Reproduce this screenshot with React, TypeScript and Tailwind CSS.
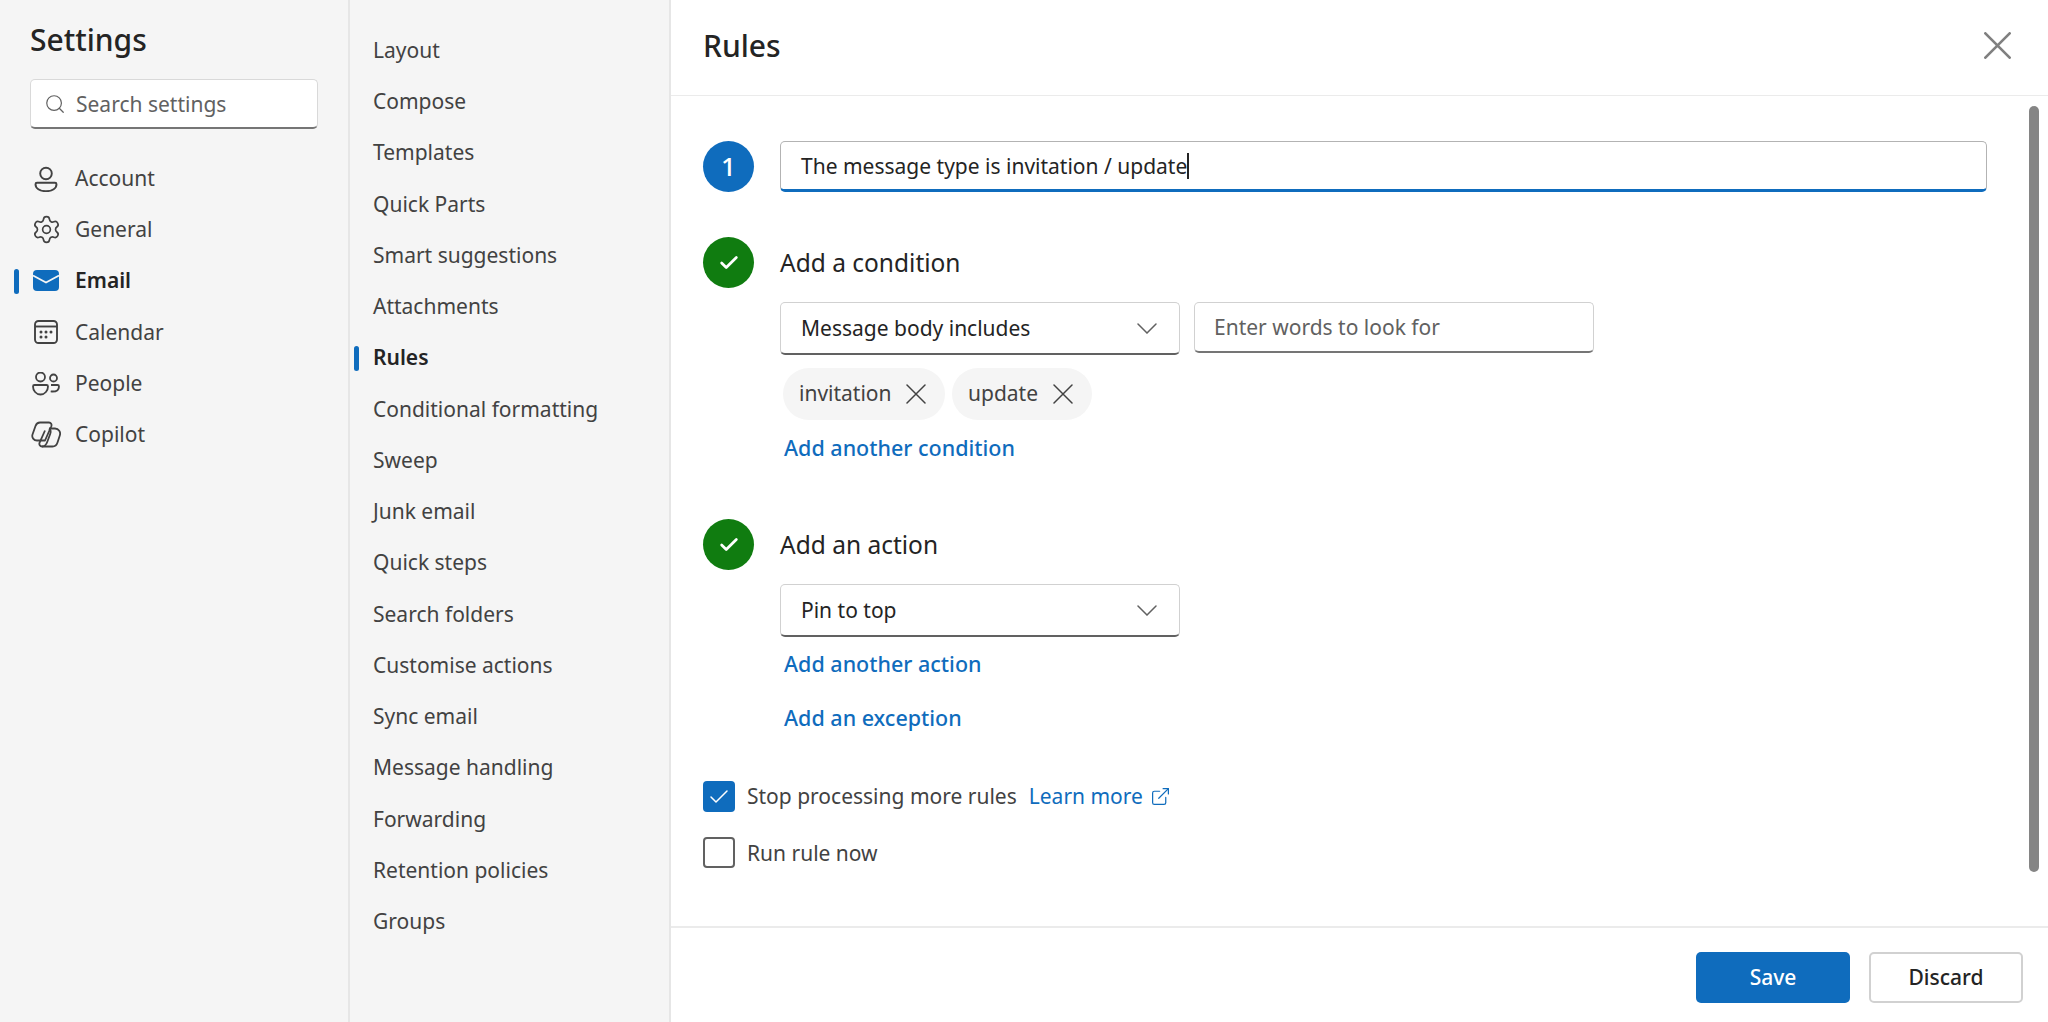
import { Check, ExternalLink, Search, Settings as SettingsIcon } from "lucide-react";
import type { ReactNode } from "react";

const FONT = "font-['Noto_Sans','Open_Sans',sans-serif]";

function PersonIcon() {
  return (
    <svg viewBox="0 0 26 26" className="h-[26px] w-[26px]" fill="none" stroke="#424242" strokeWidth="1.900">
      <circle cx="13" cy="7.500" r="5.800" />
      <path d="M2.500 18.200c0-.9.700-1.400 1.500-1.400h18c.8 0 1.500.5 1.500 1.400 0 4-4 7-10.500 7s-10.500-3-10.500-7z" />
    </svg>
  );
}

function MailIcon() {
  return (
    <svg viewBox="0 0 26 22" className="h-[22px] w-[26px]">
      <rect x="0" y="0" width="26" height="21" rx="4" fill="#0f6cbd" />
      <path d="M0 5.500l13 7 13-7" fill="none" stroke="#f5f5f5" strokeWidth="1.800" />
    </svg>
  );
}

function CalendarIcon() {
  return (
    <svg viewBox="0 0 24 24" className="h-[24px] w-[24px]" fill="none" stroke="#424242" strokeWidth="1.900">
      <rect x="1" y="1" width="22" height="22" rx="3.500" />
      <path d="M1 6.500h22" />
      <g fill="#424242" stroke="none">
        <circle cx="7" cy="12" r="1.500" />
        <circle cx="12" cy="12" r="1.500" />
        <circle cx="17" cy="12" r="1.500" />
        <circle cx="7" cy="17" r="1.500" />
        <circle cx="12" cy="17" r="1.500" />
      </g>
    </svg>
  );
}

function PeopleIcon() {
  return (
    <svg viewBox="0 0 28 24" className="h-[24px] w-[28px]" fill="none" stroke="#424242" strokeWidth="1.800">
      <circle cx="8.500" cy="5" r="4.500" />
      <circle cx="21.500" cy="6" r="3.500" />
      <path d="M1 14.500c0-.9.700-1.500 1.500-1.500h12c.8 0 1.500.6 1.500 1.500 0 4-3 8-7.500 8S1 18.500 1 14.500z" />
      <path d="M19 13h6.500c.9 0 1.500.6 1.500 1.400 0 3-2.500 5.100-6.500 5.100-.7 0-1.200-.1-1.800-.2" />
    </svg>
  );
}

function CopilotIcon() {
  return (
    <svg viewBox="0 0 30 27" className="h-[27px] w-[30px]" fill="none" stroke="#424242" strokeWidth="1.800" strokeLinejoin="round">
      <path d="M9 1.500h9c2 0 3 2 2.300 3.800L14 19.500H6c-3.200 0-5.500-3-4.500-6L4.500 5C5.300 2.800 7 1.500 9 1.500z" />
      <path d="M18 7.500h6c3.700 0 6 3.500 4.800 7l-2.300 7c-.8 2.600-2.700 4-5 4H11c-2 0-3.200-2-2.400-3.900L14 9.500" />
      <path d="M18 7.500c2 1.500 2 3.500 1.200 5.500l-3 8c-.6 1.700-2.500 4.500-5.200 4.500" />
    </svg>
  );
}

function CrossIcon({ className, weight = 1.500 }: { className: string; weight?: number }) {
  return (
    <svg viewBox="0 0 20 20" className={className} fill="none" stroke="currentColor" strokeLinecap="round">
      <path d="M1 1l18 18M19 1L1 19" strokeWidth={weight} />
    </svg>
  );
}

function ChevronIcon() {
  return (
    <svg viewBox="0 0 20 11" className="h-[11px] w-[20px] text-[#616161]" fill="none" stroke="currentColor" strokeWidth="1.500" strokeLinecap="round">
      <path d="M1 1l9 9 9-9" />
    </svg>
  );
}

const MAIN_NAV: { label: string; icon: ReactNode; active?: boolean }[] = [
  { label: "Account", icon: <PersonIcon /> },
  { label: "General", icon: <SettingsIcon className="h-[31px] w-[31px] text-[#424242]" strokeWidth={1.300} /> },
  { label: "Email", icon: <MailIcon />, active: true },
  { label: "Calendar", icon: <CalendarIcon /> },
  { label: "People", icon: <PeopleIcon /> },
  { label: "Copilot", icon: <CopilotIcon /> },
];

const SUB_NAV = [
  "Layout",
  "Compose",
  "Templates",
  "Quick Parts",
  "Smart suggestions",
  "Attachments",
  "Rules",
  "Conditional formatting",
  "Sweep",
  "Junk email",
  "Quick steps",
  "Search folders",
  "Customise actions",
  "Sync email",
  "Message handling",
  "Forwarding",
  "Retention policies",
  "Groups",
];

function StepDone() {
  return (
    <div className="flex h-[51px] w-[51px] shrink-0 items-center justify-center rounded-full bg-[#107c10]">
      <Check className="h-[22px] w-[22px] text-white" strokeWidth={3} />
    </div>
  );
}

function Dropdown({ label }: { label: string }) {
  return (
    <div className="flex h-[53px] w-[400px] items-center justify-between rounded-[5px] border border-[#d1d1d1] border-b-2 border-b-[#616161] bg-white pl-[20px] pr-[22px]">
      <span className="pt-[2px] text-[21px] text-[#242424]">{label}</span>
      <ChevronIcon />
    </div>
  );
}

function Chip({ label, className }: { label: string; className: string }) {
  return (
    <div className={`flex h-[52px] items-center justify-between rounded-full bg-[#f5f5f5] pl-[16px] pr-[19px] ${className}`}>
      <span className="text-[21px] text-[#424242]">{label}</span>
      <CrossIcon className="h-[20px] w-[20px] text-[#424242]" />
    </div>
  );
}

function LinkText({ children, className }: { children: ReactNode; className: string }) {
  return <div className={`ml-[4px] h-[28px] text-[21.500px] font-[550] leading-[28px] text-[#0f6cbd] ${className}`}>{children}</div>;
}

export default function App() {
  return (
    <div className={`${FONT} flex h-[1022px] w-[2048px] overflow-hidden bg-white`}>
      {/* Settings categories */}
      <aside className="h-full w-[350px] shrink-0 border-r-2 border-[#e6e6e6] bg-[#f5f5f5] pl-[30px]">
        <h1 className="mt-[18px] h-[44px] text-[30px] font-[550] leading-[44px] text-[#242424]">Settings</h1>
        <div className="mt-[17px] flex h-[50px] w-[288px] items-center rounded-[5px] border border-[#d9d9d9] border-b-2 border-b-[#757575] bg-white pl-[13px]">
          <Search className="h-[22px] w-[22px] text-[#616161]" strokeWidth={1.300} />
          <span className="ml-[10px] pt-[2px] text-[21px] text-[#616161]">Search settings</span>
        </div>
        <nav className="mt-[24px]">
          {MAIN_NAV.map((item) => (
            <div key={item.label} className="relative flex h-[51.250px] items-center">
              {item.active && <span className="absolute left-[-16px] top-[13px] h-[25px] w-[5px] rounded-full bg-[#0f6cbd]" />}
              <span className="flex w-[32px] items-center justify-center">{item.icon}</span>
              <span className={`ml-[13px] text-[21px] ${item.active ? "font-semibold text-[#242424]" : "text-[#424242]"}`}>{item.label}</span>
            </div>
          ))}
        </nav>
      </aside>

      {/* Email sub sections */}
      <nav className="h-full w-[321px] shrink-0 border-r-2 border-[#e6e6e6] bg-[#f5f5f5] pl-[23px] pt-[25px]">
        {SUB_NAV.map((label) => (
          <div key={label} className="relative flex h-[51.250px] items-center">
            {label === "Rules" && <span className="absolute left-[-19px] top-[13px] h-[25px] w-[5px] rounded-full bg-[#0f6cbd]" />}
            <span className={`text-[21px] ${label === "Rules" ? "font-semibold text-[#242424]" : "text-[#424242]"}`}>{label}</span>
          </div>
        ))}
      </nav>

      <main className="relative flex h-full flex-1 flex-col">
        <header className="flex h-[96px] shrink-0 items-center justify-between border-b border-[#ebebeb] pl-[32px] pr-[37px]">
          <h2 className="mb-[4px] text-[30px] font-[550] text-[#242424]">Rules</h2>
          <CrossIcon className="mb-[4px] h-[27px] w-[27px] text-[#808080]" weight={2} />
        </header>

        <div className="flex-1 pl-[32px]">
          <div className="mt-[45px] flex gap-[26px]">
            <div className="flex h-[51px] w-[51px] shrink-0 items-center justify-center rounded-full bg-[#0f6cbd] text-[26px] font-medium text-white">1</div>
            <div className="flex h-[51px] w-[1207px] items-center rounded-[5px] border border-[#b3b3b3] border-b-[3px] border-b-[#0f6cbd] pl-[20px]">
              <span className="pt-[2px] text-[21px] text-[#242424]">The message type is invitation / update</span>
              <span className="h-[26px] w-[2px] bg-[#242424]" />
            </div>
          </div>

          <div className="mt-[45px] flex gap-[26px]">
            <StepDone />
            <div>
              <div className="flex h-[51px] items-center pt-[2px] text-[24.500px] text-[#242424]">Add a condition</div>
              <div className="mt-[14px] flex items-start gap-[14px]">
                <Dropdown label="Message body includes" />
                <div className="flex h-[51px] w-[400px] items-center rounded-[5px] border border-[#d1d1d1] border-b-2 border-b-[#757575] pl-[19px] pt-[2px] text-[21px] text-[#616161]">
                  Enter words to look for
                </div>
              </div>
              <div className="ml-[3px] mt-[13px] flex gap-[7px]">
                <Chip label="invitation" className="w-[162px]" />
                <Chip label="update" className="w-[140px]" />
              </div>
              <LinkText className="mt-[14px]">Add another condition</LinkText>
            </div>
          </div>

          <div className="mt-[57px] flex gap-[26px]">
            <StepDone />
            <div>
              <div className="flex h-[51px] items-center pt-[2px] text-[24.500px] text-[#242424]">Add an action</div>
              <div className="mt-[14px]">
                <Dropdown label="Pin to top" />
              </div>
              <LinkText className="mt-[13px]">Add another action</LinkText>
              <LinkText className="mt-[26px]">Add an exception</LinkText>
            </div>
          </div>

          <div className="mt-[49px] flex h-[31px] items-center">
            <div className="flex h-[31px] w-[32px] items-center justify-center rounded-[4px] bg-[#0f6cbd]">
              <Check className="h-[24px] w-[24px] text-white" strokeWidth={1.500} />
            </div>
            <span className="ml-[12px] text-[21px] text-[#424242]">Stop processing more rules</span>
            <span className="ml-[12px] text-[21px] text-[#0f6cbd]">Learn more</span>
            <ExternalLink className="ml-[7px] h-[21px] w-[21px] text-[#0f6cbd]" strokeWidth={1.400} />
          </div>

          <div className="mt-[25px] flex h-[31px] items-center">
            <div className="h-[31px] w-[32px] rounded-[4px] border-2 border-[#616161] bg-white" />
            <span className="ml-[12px] pt-[2px] text-[21px] text-[#424242]">Run rule now</span>
          </div>
        </div>

        <footer className="flex h-[96px] shrink-0 items-start justify-end gap-[19px] border-t-2 border-[#ebebeb] pr-[25px] pt-[24px]">
          <button className="h-[51px] w-[154px] rounded-[5px] bg-[#0f6cbd] text-[21px] font-[550] text-white">Save</button>
          <button className="h-[51px] w-[154px] rounded-[5px] border-2 border-[#d1d1d1] bg-white text-[21px] font-[550] text-[#242424]">Discard</button>
        </footer>

        {/* overlay scrollbar */}
        <div className="absolute right-[9px] top-[106px] h-[766px] w-[10px] rounded-full bg-[#858585]" />
      </main>
    </div>
  );
}
